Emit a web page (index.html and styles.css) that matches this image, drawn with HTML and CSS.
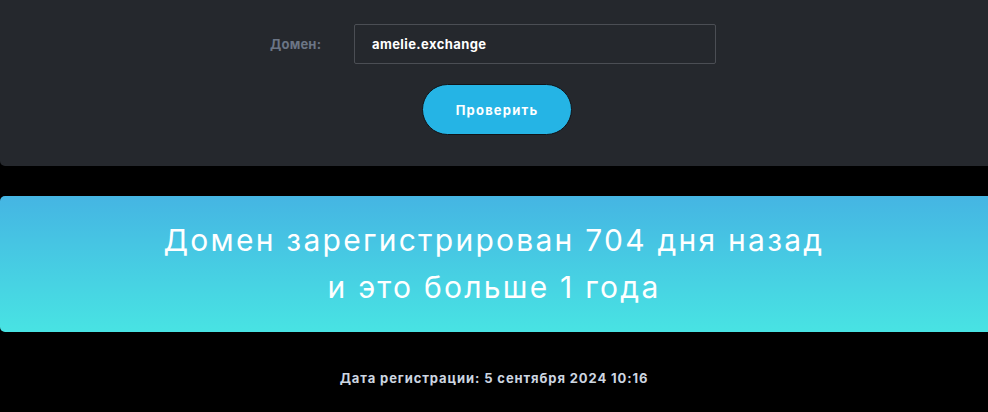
FILE: index.html
```html
<!DOCTYPE html>
<html lang="ru">
<head>
<meta charset="utf-8">
<title>Проверка домена</title>
<link rel="stylesheet" href="styles.css">
</head>
<body>
<section class="panel">
  <form class="check-form">
    <div class="field">
      <label class="field-label" for="domain">Домен:</label>
      <input class="field-input" id="domain" type="text" value="amelie.exchange">
    </div>
    <button class="btn" type="button">Проверить</button>
  </form>
</section>
<section class="result">
  <p class="result-text">Домен зарегистрирован 704 дня назад<br>и это больше 1 года</p>
</section>
<p class="reg-date">Дата регистрации: 5 сентября 2024 10:16</p>
</body>
</html>
```
FILE: styles.css
```css
* { box-sizing: border-box; }
html, body { margin: 0; padding: 0; }
body {
  background: #000;
  font-family: Inter, "Open Sans", "Liberation Sans", sans-serif;
  width: 988px;
  overflow: hidden;
}
.panel {
  background: #25282d;
  height: 166px;
  border-radius: 0 0 0 5px;
  padding-top: 24px;
}
.check-form {
  display: flex;
  flex-direction: column;
  align-items: center;
}
.field {
  display: flex;
  align-items: center;
  margin-left: -2px;
}
.field-label {
  width: 84px;
  font-size: 13px;
  font-weight: 700;
  color: #6b7585;
  letter-spacing: 0.2px;
}
.field-input {
  width: 362px;
  height: 40px;
  background: transparent;
  border: 1px solid #4b4e54;
  border-radius: 2px;
  padding: 0 17px;
  color: #fff;
  font-family: inherit;
  font-size: 13px;
  font-weight: 700;
  letter-spacing: 0.4px;
  outline: none;
}
.btn {
  margin-top: 20px;
  margin-left: 6px;
  width: 150px;
  height: 51px;
  border-radius: 26px;
  border: 1px solid #111418;
  background: #25b4e5;
  color: #fff;
  font-family: inherit;
  font-size: 13px;
  font-weight: 700;
  letter-spacing: 1.2px;
}
.result {
  margin-top: 30px;
  height: 136px;
  background: linear-gradient(180deg, #45b5e3 0%, #48e3e3 100%);
  border-radius: 5px 0 0 5px;
  display: flex;
  align-items: center;
  justify-content: center;
}
.result-text {
  margin: 0;
  text-align: center;
  color: #fff;
  font-size: 30px;
  font-weight: 400;
  line-height: 47px;
  letter-spacing: 2.25px;
}
.reg-date {
  margin: 38px 0 0;
  text-align: center;
  color: #cdd6e1;
  font-size: 13px;
  font-weight: 700;
  letter-spacing: 0.9px;
}
```
